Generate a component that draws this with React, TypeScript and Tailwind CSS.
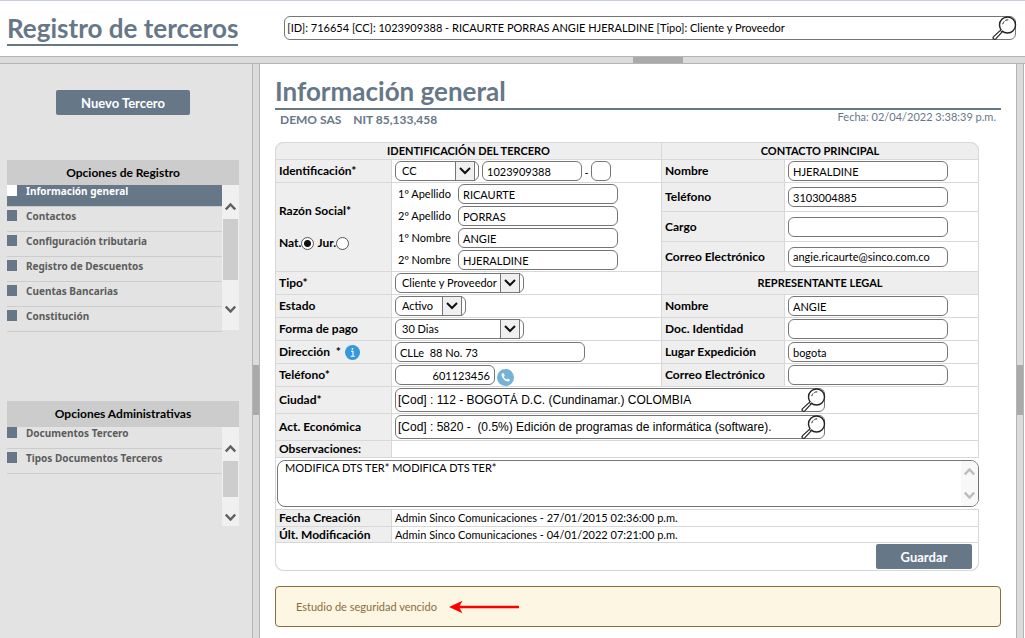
import { ReactNode } from "react";
import clsx from "clsx";

const registro = [
  "Información general",
  "Contactos",
  "Configuración tributaria",
  "Registro de Descuentos",
  "Cuentas Bancarias",
  "Constitución",
];
const administrativas = ["Documentos Tercero", "Tipos Documentos Terceros"];

const nombres = [
  { id: "apellido1", label: "1º Apellido", value: "RICAURTE" },
  { id: "apellido2", label: "2º Apellido", value: "PORRAS" },
  { id: "nombre1", label: "1º Nombre", value: "ANGIE" },
  { id: "nombre2", label: "2º Nombre", value: "HJERALDINE" },
];

function Lupa() {
  return (
    <svg width="25" height="24" viewBox="0 0 25 24" fill="none" stroke="#222">
      <circle cx="15.5" cy="9" r="8" strokeWidth="1.4" fill="#fff" />
      <path d="M10.8 8.2a5 5 0 0 1 1.4-2.8M13.3 4.5a5 5 0 0 1 3-.6" strokeWidth="1" />
      <path d="M9.2 13.6 1.6 20.6c-.9.9-.7 2 .1 2.5.7.4 1.4.3 2-.3l7.2-7.6" strokeWidth="1.2" fill="#fff" />
      <path d="m8.2 14.6 1.9 1.6" strokeWidth="1" />
    </svg>
  );
}

function Flecha({ up, color = "#606060" }: { up?: boolean; color?: string }) {
  return (
    <svg width="11" height="9" viewBox="0 0 11 9" fill="none" stroke={color} strokeWidth="2.4">
      <path d={up ? "M.8 7.4 5.5 2.4l4.7 5" : "M.8 1.6l4.7 5 4.7-5"} />
    </svg>
  );
}

function Buscador({ id, label, value, className }: { id: string; label: string; value: string; className?: string }) {
  return (
    <div className={clsx("flex h-6 items-center rounded-md border border-[#767676] bg-white", className)}>
      <input id={id} aria-label={label} defaultValue={value} className="min-w-0 flex-1 px-0.5 outline-none" />
      <button type="button" aria-label="Buscar" className="-mr-0.5">
        <Lupa />
      </button>
    </div>
  );
}

function Campo({ id, value, label, className }: { id: string; value?: string; label?: string; className?: string }) {
  return (
    <input
      id={id}
      aria-label={label}
      defaultValue={value}
      className={clsx("h-5 rounded-md border border-[#767676] bg-white px-1 outline-none", className)}
    />
  );
}

function Lista({ id, value, className }: { id: string; value: string; className: string }) {
  return (
    <div className={clsx("relative h-5", className)}>
      <select id={id} className="h-5 w-full appearance-none rounded-md border border-[#767676] bg-white pl-1.5 outline-none">
        <option>{value}</option>
      </select>
      <span className="pointer-events-none absolute top-0 right-1 flex h-5 w-5 items-center justify-center border border-[#767676] bg-[#f0f0f0]">
        <svg width="12" height="8" viewBox="0 0 12 8" fill="none" stroke="#111" strokeWidth="2">
          <path d="m1 1 5 5 5-5" />
        </svg>
      </span>
    </div>
  );
}

function Etiqueta({ htmlFor, children, className }: { htmlFor?: string; children: ReactNode; className?: string }) {
  return (
    <div className={clsx("flex items-center bg-[#eeeeee] px-[3px] text-[12px] font-bold", className)}>
      {htmlFor ? <label htmlFor={htmlFor}>{children}</label> : <span>{children}</span>}
    </div>
  );
}

function Celda({ children, className }: { children?: ReactNode; className?: string }) {
  return <div className={clsx("flex items-center bg-white px-[3px]", className)}>{children}</div>;
}

function Titulo({ children, className }: { children: ReactNode; className?: string }) {
  return (
    <h3 className={clsx("col-span-2 flex items-center justify-center bg-[#eeeeee] text-[11px] font-bold", className)}>
      {children}
    </h3>
  );
}

function Menu({ title, items, active, small }: { title: string; items: string[]; active?: number; small?: boolean }) {
  return (
    <section>
      <h2
        className={clsx(
          "flex items-center justify-center bg-[#cccccc] text-[12px] font-bold text-black",
          small ? "h-[26px]" : "h-[25px]"
        )}
      >
        {title}
      </h2>
      <div className="flex items-start">
        <ul className="flex-1">
          {items.map((item, i) => (
            <li
              key={item}
              className={clsx(
                "border-b border-[#cccccc]",
                i === 0 ? "h-[22px]" : "h-[25px] pt-[3px]",
                i === active ? "bg-[#667788] text-white" : "text-[#5c5c5c]"
              )}
            >
              <a href="#" className="flex items-start gap-[9px] font-['Noto_Sans',sans-serif] text-[10px] leading-[13px] font-bold">
                <span className={clsx("h-[11px] w-2.5", i === active ? "bg-white" : "bg-[#667788]")} />
                {item}
              </a>
            </li>
          ))}
        </ul>
        <div className={clsx("flex w-[17px] flex-col items-center bg-[#f0f0f0]", small ? "h-[99px]" : "h-[145px]")}>
          <button type="button" aria-label="Subir" className="flex h-[34px] items-end pb-2">
            <Flecha up />
          </button>
          <div className={clsx("w-[15px] bg-[#cdcdcd]", small ? "h-9" : "h-[61px]")} />
          <button type="button" aria-label="Bajar" className="flex flex-1 items-end pb-1">
            <span className={small ? "" : "pb-3"}>
              <Flecha />
            </span>
          </button>
        </div>
      </div>
    </section>
  );
}

export default function App() {
  return (
    <div className="flex min-h-screen flex-col border-t border-[#c5cde0] bg-white font-['Lato','Liberation_Sans',sans-serif] text-[11px] leading-[14px] text-black">
      <header className="flex h-[55px] items-start">
        <h1 className="mt-[11px] ml-[7px] border-b-2 border-[#667788] text-[26px] leading-[32px] font-bold text-[#667788]">
          Registro de terceros
        </h1>
        <Buscador
          id="tercero"
          label="Tercero"
          value="[ID]: 716654 [CC]: 1023909388 - RICAURTE PORRAS ANGIE HJERALDINE [Tipo]: Cliente y Proveedor"
          className="mt-[15px] mr-[9px] ml-[46px] flex-1"
        />
      </header>

      <div className="flex h-2 justify-center border-y border-[#b4b4b4] bg-[#dcdcdc] pl-[291px]">
        <div className="w-[50px] bg-[#aaaaaa]" />
      </div>

      <div className="flex flex-1">
        <aside className="w-[252px] bg-[#e3e3e3] pr-[13px] pl-[7px]">
          <div className="flex justify-center pt-[26px]">
            <button type="button" className="h-[25px] w-[134px] rounded-xs bg-[#667788] text-[13px] font-bold text-white">
              Nuevo Tercero
            </button>
          </div>
          <div className="mt-[45px] flex flex-col gap-[69px]">
            <Menu title="Opciones de Registro" items={registro} active={0} />
            <Menu title="Opciones Administrativas" items={administrativas} small />
          </div>
        </aside>

        <div className="w-2 border-x border-[#b4b4b4] bg-[#dcdcdc] pt-[301px]">
          <div className="h-[50px] bg-[#aaaaaa]" />
        </div>

        <main className="min-w-0 flex-1 px-[15px] pt-[11px]">
          <h2 className="border-b-2 border-[#667788] text-[26px] leading-[33px] font-bold text-[#667788]">
            Información general
          </h2>
          <div className="flex justify-between px-[5px] text-[#667788]">
            <div className="flex gap-3 pt-0.5 text-[12px] leading-[16px] font-bold">
              <span>DEMO SAS</span>
              <span>NIT 85,133,458</span>
            </div>
            <span>Fecha: 02/04/2022 3:38:39 p.m.</span>
          </div>

          <form className="mt-[14px] mr-[22px] grid grid-cols-[115px_269px_122px_1fr] gap-px rounded-lg border border-[#d8d8d8] bg-[#d8d8d8]">
            <Titulo className="h-4 rounded-tl-lg">IDENTIFICACIÓN DEL TERCERO</Titulo>
            <Titulo className="h-4 rounded-tr-lg">CONTACTO PRINCIPAL</Titulo>

            <Etiqueta htmlFor="tipoId" className="h-[22px]">Identificación*</Etiqueta>
            <Celda>
              <Lista id="tipoId" value="CC" className="w-[84px]" />
              <Campo id="numero" label="Número" value="1023909388" className="ml-[3px] w-[100px]" />
              <span className="w-[9px] pt-1 text-center">-</span>
              <Campo id="digito" label="Dígito" className="w-5" />
            </Celda>
            <Etiqueta htmlFor="cNombre">Nombre</Etiqueta>
            <Celda>
              <Campo id="cNombre" value="HJERALDINE" className="w-40" />
            </Celda>

            <div className="row-span-3 flex flex-col justify-center gap-[18px] bg-[#eeeeee] px-[3px] text-[12px] font-bold">
              <span>Razón Social*</span>
              <div className="flex items-center">
                <label htmlFor="nat">Nat.</label>
                <input
                  id="nat"
                  type="radio"
                  name="persona"
                  defaultChecked
                  className="h-[13px] w-[13px] appearance-none rounded-full border border-[#555] bg-white checked:bg-[radial-gradient(#111_0_3px,#fff_4px)]"
                />
                <label htmlFor="jur" className="ml-[3px]">Jur.</label>
                <input
                  id="jur"
                  type="radio"
                  name="persona"
                  className="h-[13px] w-[13px] appearance-none rounded-full border border-[#555] bg-white checked:bg-[radial-gradient(#111_0_3px,#fff_4px)]"
                />
              </div>
            </div>
            <Celda className="row-span-3">
              <div className="flex flex-col gap-0.5">
                {nombres.map((n) => (
                  <div key={n.id} className="flex items-center">
                    <label htmlFor={n.id} className="w-[63px] pl-[3px]">{n.label}</label>
                    <Campo id={n.id} value={n.value} className="w-40" />
                  </div>
                ))}
              </div>
            </Celda>
            <Etiqueta htmlFor="cTelefono" className="h-7">Teléfono</Etiqueta>
            <Celda>
              <Campo id="cTelefono" value="3103004885" className="w-40" />
            </Celda>
            <Etiqueta htmlFor="cargo" className="h-[29px]">Cargo</Etiqueta>
            <Celda>
              <Campo id="cargo" className="w-40" />
            </Celda>
            <Etiqueta htmlFor="cCorreo" className="h-[29px]">Correo Electrónico</Etiqueta>
            <Celda>
              <Campo id="cCorreo" value="angie.ricaurte@sinco.com.co" className="w-40" />
            </Celda>

            <Etiqueta htmlFor="tipo" className="h-[22px]">Tipo*</Etiqueta>
            <Celda>
              <Lista id="tipo" value="Cliente y Proveedor" className="w-[129px]" />
            </Celda>
            <Titulo>REPRESENTANTE LEGAL</Titulo>

            <Etiqueta htmlFor="estado" className="h-[22px]">Estado</Etiqueta>
            <Celda>
              <Lista id="estado" value="Activo" className="w-[71px]" />
            </Celda>
            <Etiqueta htmlFor="rNombre">Nombre</Etiqueta>
            <Celda>
              <Campo id="rNombre" value="ANGIE" className="w-40" />
            </Celda>

            <Etiqueta htmlFor="pago" className="h-[22px]">Forma de pago</Etiqueta>
            <Celda>
              <Lista id="pago" value="30 Dias" className="w-[129px]" />
            </Celda>
            <Etiqueta htmlFor="rDoc">Doc. Identidad</Etiqueta>
            <Celda>
              <Campo id="rDoc" className="w-40" />
            </Celda>

            <div className="flex h-[22px] items-center bg-[#eeeeee] px-[3px] text-[12px] font-bold">
              <label htmlFor="direccion">Dirección&nbsp; *</label>
              <svg width="15" height="15" viewBox="0 0 15 15" className="ml-1">
                <circle cx="7.5" cy="7.5" r="7.5" fill="#3498db" />
                <path d="M6 6.2h2v5M5.6 11.3h4.2" stroke="#fff" strokeWidth="1.1" fill="none" />
                <circle cx="7.4" cy="3.8" r=".9" fill="#fff" />
              </svg>
            </div>
            <Celda>
              <Campo id="direccion" value="CLLe  88 No. 73" className="w-[190px]" />
            </Celda>
            <Etiqueta htmlFor="rLugar">Lugar Expedición</Etiqueta>
            <Celda>
              <Campo id="rLugar" value="bogota" className="w-40" />
            </Celda>

            <Etiqueta htmlFor="telefono" className="h-[22px]">Teléfono*</Etiqueta>
            <Celda>
              <Campo id="telefono" value="601123456" className="w-[100px] text-right" />
              <button type="button" aria-label="Llamar" className="ml-0.5 pt-1">
                <svg width="17" height="17" viewBox="0 0 17 17">
                  <circle cx="8.5" cy="8.5" r="8.5" fill="#74b3d6" />
                  <path
                    d="M5.6 4.2c-.9.4-1.3 1.2-1.1 2.1.6 2.9 3.2 5.6 6.2 6.3.9.2 1.7-.2 2-1l.2-.8-2.1-1.3-1.2 1c-1.3-.6-2.2-1.5-2.8-2.8l1-1.1-1.1-2.3z"
                    fill="#fff"
                  />
                </svg>
              </button>
            </Celda>
            <Etiqueta htmlFor="rCorreo">Correo Electrónico</Etiqueta>
            <Celda>
              <Campo id="rCorreo" className="w-40" />
            </Celda>

            <Etiqueta htmlFor="ciudad" className="h-[26px]">Ciudad*</Etiqueta>
            <Celda className="col-span-3 font-['Liberation_Sans',sans-serif] text-[12px]">
              <Buscador id="ciudad" label="Ciudad" value="[Cod] : 112 - BOGOTÁ D.C. (Cundinamar.) COLOMBIA" className="w-[430px]" />
            </Celda>
            <Etiqueta htmlFor="actividad" className="h-[26px]">Act. Económica</Etiqueta>
            <Celda className="col-span-3 font-['Liberation_Sans',sans-serif] text-[12px]">
              <Buscador
                id="actividad"
                label="Act. Económica"
                value="[Cod] : 5820 -  (0.5%) Edición de programas de informática (software)."
                className="w-[430px]"
              />
            </Celda>

            <Etiqueta htmlFor="observaciones" className="h-4">Observaciones:</Etiqueta>
            <Celda className="col-span-3" />
            <div className="col-span-4 -mr-px flex h-[51px] items-center bg-white pl-px">
              <div className="flex h-[47px] w-full overflow-hidden rounded-lg border border-[#767676] bg-white">
                <textarea
                  id="observaciones"
                  defaultValue="MODIFICA DTS TER* MODIFICA DTS TER*"
                  className="flex-1 resize-none overflow-hidden px-[7px] outline-none"
                />
                <div className="flex w-[17px] flex-col items-center justify-between bg-[#f8f8f8] py-1.5">
                  <Flecha up color="#bdbdbd" />
                  <Flecha color="#bdbdbd" />
                </div>
              </div>
            </div>

            <Etiqueta className="h-4">Fecha Creación</Etiqueta>
            <Celda className="col-span-3">Admin Sinco Comunicaciones - 27/01/2015 02:36:00 p.m.</Celda>
            <Etiqueta className="h-[15px]">Últ. Modificación</Etiqueta>
            <Celda className="col-span-3">Admin Sinco Comunicaciones - 04/01/2022 07:21:00 p.m.</Celda>
            <div className="col-span-4 flex h-[27px] items-center justify-end rounded-b-lg bg-white pr-1.5">
              <button type="button" className="h-[25px] w-24 rounded-xs bg-[#667788] text-[13px] font-bold text-white">
                Guardar
              </button>
            </div>
          </form>

          <div role="alert" className="mt-[15px] flex h-[41px] items-center rounded-sm border border-[#8a6d3b] bg-[#fdf6e3] pl-5 text-[#8a6d3b]">
            Estudio de seguridad vencido
            <svg width="70" height="14" viewBox="0 0 70 14" className="ml-3">
              <path d="M8 7h61" stroke="#f00" strokeWidth="2.6" strokeLinecap="round" />
              <path d="M0 7 13.5.8 10 7l3.5 6.2z" fill="#f00" />
            </svg>
          </div>
        </main>

        <div className="mr-px w-2 border-x border-[#b4b4b4] bg-[#dcdcdc] pt-[301px]">
          <div className="h-[50px] bg-[#aaaaaa]" />
        </div>
      </div>
    </div>
  );
}
